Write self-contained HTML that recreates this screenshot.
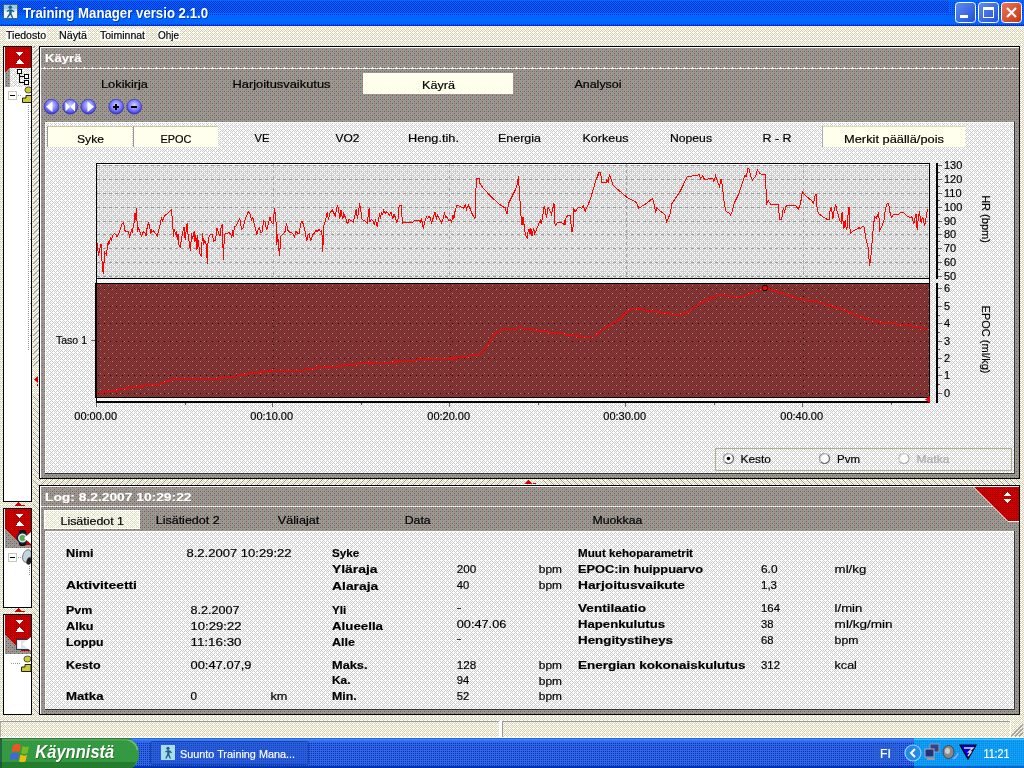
<!DOCTYPE html>
<html lang="fi"><head><meta charset="utf-8"><title>Training Manager versio 2.1.0</title>
<style>html,body{margin:0;padding:0;width:1024px;height:768px;overflow:hidden;background:#ece9d8;font-family:"Liberation Sans",sans-serif}svg{display:block;position:absolute;left:0;top:0;will-change:transform}text{font-family:"Liberation Sans",sans-serif;white-space:pre}</style></head>
<body>
<svg width="1024" height="768" viewBox="0 0 1024 768" shape-rendering="crispEdges" font-family="'Liberation Sans', sans-serif">
<defs><pattern id="pBeige" x="0" y="2" width="4" height="4" patternUnits="userSpaceOnUse"><rect width="4" height="4" fill="#ffffff"/><rect x="0" y="1" width="1" height="1" fill="#cccccc"/><rect x="0" y="3" width="1" height="1" fill="#cccccc"/><rect x="1" y="0" width="1" height="1" fill="#cccccc"/><rect x="1" y="1" width="1" height="1" fill="#ffffcc"/><rect x="1" y="2" width="1" height="1" fill="#ffffcc"/><rect x="1" y="3" width="1" height="1" fill="#ffffcc"/><rect x="2" y="1" width="1" height="1" fill="#cccccc"/><rect x="2" y="3" width="1" height="1" fill="#cccccc"/><rect x="3" y="0" width="1" height="1" fill="#ffcccc"/><rect x="3" y="1" width="1" height="1" fill="#ffffcc"/><rect x="3" y="2" width="1" height="1" fill="#cccccc"/><rect x="3" y="3" width="1" height="1" fill="#ffffcc"/></pattern><pattern id="pGray" x="0" y="1" width="8" height="8" patternUnits="userSpaceOnUse"><rect width="8" height="8" fill="#999999"/><rect x="0" y="0" width="1" height="1" fill="#99995c"/><rect x="0" y="2" width="1" height="1" fill="#626262"/><rect x="0" y="4" width="1" height="1" fill="#99995c"/><rect x="0" y="6" width="1" height="1" fill="#626262"/><rect x="1" y="5" width="1" height="1" fill="#99995c"/><rect x="2" y="0" width="1" height="1" fill="#b86868"/><rect x="2" y="2" width="1" height="1" fill="#b86868"/><rect x="2" y="4" width="1" height="1" fill="#626262"/><rect x="2" y="6" width="1" height="1" fill="#b86868"/><rect x="4" y="0" width="1" height="1" fill="#99995c"/><rect x="4" y="2" width="1" height="1" fill="#626262"/><rect x="4" y="4" width="1" height="1" fill="#99995c"/><rect x="4" y="6" width="1" height="1" fill="#626262"/><rect x="5" y="1" width="1" height="1" fill="#99995c"/><rect x="6" y="0" width="1" height="1" fill="#626262"/><rect x="6" y="2" width="1" height="1" fill="#b86868"/><rect x="6" y="4" width="1" height="1" fill="#626262"/><rect x="6" y="6" width="1" height="1" fill="#b86868"/></pattern><pattern id="pLight" x="0" y="0" width="8" height="8" patternUnits="userSpaceOnUse"><rect width="8" height="8" fill="#ffffff"/><rect x="0" y="1" width="1" height="1" fill="#cccccc"/><rect x="0" y="3" width="1" height="1" fill="#cccccc"/><rect x="0" y="5" width="1" height="1" fill="#cccccc"/><rect x="0" y="7" width="1" height="1" fill="#cccccc"/><rect x="1" y="2" width="1" height="1" fill="#cccccc"/><rect x="1" y="6" width="1" height="1" fill="#cccccc"/><rect x="2" y="1" width="1" height="1" fill="#cccccc"/><rect x="2" y="3" width="1" height="1" fill="#cccccc"/><rect x="2" y="5" width="1" height="1" fill="#cccccc"/><rect x="2" y="7" width="1" height="1" fill="#cccccc"/><rect x="3" y="0" width="1" height="1" fill="#cccccc"/><rect x="3" y="4" width="1" height="1" fill="#cccccc"/><rect x="3" y="6" width="1" height="1" fill="#cccccc"/><rect x="4" y="1" width="1" height="1" fill="#cccccc"/><rect x="4" y="3" width="1" height="1" fill="#cccccc"/><rect x="4" y="5" width="1" height="1" fill="#cccccc"/><rect x="4" y="7" width="1" height="1" fill="#cccccc"/><rect x="5" y="2" width="1" height="1" fill="#cccccc"/><rect x="5" y="6" width="1" height="1" fill="#cccccc"/><rect x="6" y="1" width="1" height="1" fill="#cccccc"/><rect x="6" y="3" width="1" height="1" fill="#cccccc"/><rect x="6" y="5" width="1" height="1" fill="#cccccc"/><rect x="6" y="7" width="1" height="1" fill="#cccccc"/><rect x="7" y="0" width="1" height="1" fill="#cccccc"/><rect x="7" y="2" width="1" height="1" fill="#cccccc"/><rect x="7" y="4" width="1" height="1" fill="#cccccc"/></pattern><pattern id="pPlot" x="0" y="0" width="8" height="8" patternUnits="userSpaceOnUse"><rect width="8" height="8" fill="#cccccc"/><rect x="0" y="0" width="1" height="1" fill="#ffffff"/><rect x="0" y="2" width="1" height="1" fill="#ffffff"/><rect x="0" y="4" width="1" height="1" fill="#ffffff"/><rect x="0" y="6" width="1" height="1" fill="#ffffff"/><rect x="1" y="1" width="1" height="1" fill="#ffffff"/><rect x="1" y="5" width="1" height="1" fill="#ffffff"/><rect x="2" y="0" width="1" height="1" fill="#ffffff"/><rect x="2" y="2" width="1" height="1" fill="#ffffff"/><rect x="2" y="4" width="1" height="1" fill="#ffffff"/><rect x="2" y="6" width="1" height="1" fill="#ffffff"/><rect x="3" y="3" width="1" height="1" fill="#ffffff"/><rect x="4" y="0" width="1" height="1" fill="#ffffff"/><rect x="4" y="2" width="1" height="1" fill="#ffffff"/><rect x="4" y="4" width="1" height="1" fill="#ffffff"/><rect x="4" y="6" width="1" height="1" fill="#ffffff"/><rect x="5" y="1" width="1" height="1" fill="#ffffff"/><rect x="5" y="5" width="1" height="1" fill="#ffffff"/><rect x="6" y="0" width="1" height="1" fill="#ffffff"/><rect x="6" y="2" width="1" height="1" fill="#ffffff"/><rect x="6" y="4" width="1" height="1" fill="#ffffff"/><rect x="6" y="6" width="1" height="1" fill="#ffffff"/><rect x="7" y="7" width="1" height="1" fill="#ffffff"/></pattern><pattern id="pDred" x="96" y="284" width="8" height="8" patternUnits="userSpaceOnUse"><rect width="8" height="8" fill="#993333"/><rect x="0" y="0" width="1" height="1" fill="#663333"/><rect x="0" y="2" width="1" height="1" fill="#663333"/><rect x="0" y="4" width="1" height="1" fill="#663333"/><rect x="0" y="5" width="1" height="1" fill="#b88888"/><rect x="0" y="6" width="1" height="1" fill="#663333"/><rect x="1" y="1" width="1" height="1" fill="#663333"/><rect x="1" y="3" width="1" height="1" fill="#663333"/><rect x="1" y="5" width="1" height="1" fill="#663333"/><rect x="1" y="7" width="1" height="1" fill="#663333"/><rect x="2" y="0" width="1" height="1" fill="#663333"/><rect x="2" y="2" width="1" height="1" fill="#663333"/><rect x="2" y="4" width="1" height="1" fill="#663333"/><rect x="2" y="6" width="1" height="1" fill="#663333"/><rect x="3" y="1" width="1" height="1" fill="#663333"/><rect x="3" y="3" width="1" height="1" fill="#663333"/><rect x="3" y="5" width="1" height="1" fill="#663333"/><rect x="3" y="7" width="1" height="1" fill="#663333"/><rect x="4" y="0" width="1" height="1" fill="#663333"/><rect x="4" y="1" width="1" height="1" fill="#b88888"/><rect x="4" y="2" width="1" height="1" fill="#663333"/><rect x="4" y="4" width="1" height="1" fill="#663333"/><rect x="4" y="6" width="1" height="1" fill="#663333"/><rect x="5" y="1" width="1" height="1" fill="#663333"/><rect x="5" y="3" width="1" height="1" fill="#663333"/><rect x="5" y="5" width="1" height="1" fill="#663333"/><rect x="5" y="7" width="1" height="1" fill="#663333"/><rect x="6" y="0" width="1" height="1" fill="#663333"/><rect x="6" y="2" width="1" height="1" fill="#663333"/><rect x="6" y="4" width="1" height="1" fill="#663333"/><rect x="6" y="6" width="1" height="1" fill="#663333"/><rect x="7" y="1" width="1" height="1" fill="#663333"/><rect x="7" y="3" width="1" height="1" fill="#663333"/><rect x="7" y="5" width="1" height="1" fill="#663333"/><rect x="7" y="7" width="1" height="1" fill="#663333"/></pattern><pattern id="pCream" x="0" y="0" width="2" height="2" patternUnits="userSpaceOnUse"><rect width="2" height="2" fill="#ffffff"/><rect x="0" y="0" width="1" height="1" fill="#ffffcc"/><rect x="1" y="1" width="1" height="1" fill="#ffffcc"/></pattern><pattern id="pCream2" x="0" y="0" width="4" height="4" patternUnits="userSpaceOnUse"><rect width="4" height="4" fill="#ffffff"/><rect x="0" y="0" width="1" height="1" fill="#ffffcc"/><rect x="0" y="2" width="1" height="1" fill="#ffffcc"/><rect x="1" y="1" width="1" height="1" fill="#ffffcc"/><rect x="2" y="0" width="1" height="1" fill="#ffffcc"/><rect x="2" y="2" width="1" height="1" fill="#ffffcc"/><rect x="3" y="3" width="1" height="1" fill="#ffffcc"/></pattern><pattern id="pRed" x="0" y="0" width="2" height="2" patternUnits="userSpaceOnUse"><rect width="2" height="2" fill="#cc0000"/><rect x="0" y="0" width="1" height="1" fill="#990000"/></pattern><pattern id="pTitle" x="0" y="0" width="2" height="2" patternUnits="userSpaceOnUse"><rect width="2" height="2" fill="#0066ff"/><rect x="0" y="0" width="1" height="1" fill="#0033cc"/><rect x="1" y="1" width="1" height="1" fill="#0033cc"/></pattern><pattern id="pTitle25" x="0" y="0" width="2" height="2" patternUnits="userSpaceOnUse"><rect width="2" height="2" fill="#0066ff"/><rect x="0" y="0" width="1" height="1" fill="#0033cc"/></pattern><pattern id="pTitle75" x="0" y="0" width="2" height="2" patternUnits="userSpaceOnUse"><rect width="2" height="2" fill="#0033cc"/><rect x="0" y="0" width="1" height="1" fill="#0066ff"/></pattern><pattern id="pTask" x="0" y="0" width="2" height="2" patternUnits="userSpaceOnUse"><rect width="2" height="2" fill="#3366cc"/><rect x="0" y="0" width="1" height="1" fill="#3366ff"/><rect x="1" y="1" width="1" height="1" fill="#0033cc"/></pattern><pattern id="pTray" x="0" y="0" width="2" height="2" patternUnits="userSpaceOnUse"><rect width="2" height="2" fill="#0099ff"/><rect x="0" y="0" width="1" height="1" fill="#3399ff"/><rect x="1" y="1" width="1" height="1" fill="#0099cc"/></pattern><pattern id="pGreen" x="0" y="0" width="2" height="2" patternUnits="userSpaceOnUse"><rect width="2" height="2" fill="#339933"/><rect x="0" y="0" width="1" height="1" fill="#339966"/><rect x="1" y="1" width="1" height="1" fill="#33993a"/></pattern><pattern id="pHatchH" x="0" y="5" width="6" height="6" patternUnits="userSpaceOnUse"><rect width="6" height="6" fill="none"/><rect x="0" y="4" width="1" height="1" fill="#969696"/><rect x="1" y="3" width="1" height="1" fill="#969696"/><rect x="2" y="2" width="1" height="1" fill="#969696"/><rect x="3" y="1" width="1" height="1" fill="#969696"/><rect x="4" y="0" width="1" height="1" fill="#969696"/><rect x="5" y="5" width="1" height="1" fill="#969696"/></pattern><pattern id="pHatchV" x="0" y="0" width="6" height="6" patternUnits="userSpaceOnUse"><rect width="6" height="6" fill="none"/><rect x="0" y="2" width="1" height="1" fill="#969696"/><rect x="1" y="1" width="1" height="1" fill="#969696"/><rect x="2" y="0" width="1" height="1" fill="#969696"/><rect x="3" y="5" width="1" height="1" fill="#969696"/><rect x="4" y="4" width="1" height="1" fill="#969696"/><rect x="5" y="3" width="1" height="1" fill="#969696"/></pattern><pattern id="pHatchB" x="0" y="5" width="6" height="6" patternUnits="userSpaceOnUse"><rect width="6" height="6" fill="none"/><rect x="0" y="4" width="1" height="1" fill="#969696"/><rect x="1" y="5" width="1" height="1" fill="#969696"/><rect x="2" y="0" width="1" height="1" fill="#969696"/><rect x="3" y="1" width="1" height="1" fill="#969696"/><rect x="4" y="2" width="1" height="1" fill="#969696"/><rect x="5" y="3" width="1" height="1" fill="#969696"/></pattern><radialGradient id="gBtn" cx="0.5" cy="0.4" r="0.6"><stop offset="0" stop-color="#d4d4ff"/><stop offset="0.4" stop-color="#9898ff"/><stop offset="0.75" stop-color="#6060ee"/><stop offset="1" stop-color="#2c2cbb"/></radialGradient><linearGradient id="gMin" x1="0" y1="0" x2="1" y2="1"><stop offset="0" stop-color="#5f8cf5"/><stop offset="1" stop-color="#1f4fd8"/></linearGradient><linearGradient id="gClose" x1="0" y1="0" x2="1" y2="1"><stop offset="0" stop-color="#ee7755"/><stop offset="1" stop-color="#c83311"/></linearGradient><linearGradient id="gStart" x1="0" y1="0" x2="0" y2="1"><stop offset="0" stop-color="#5aa85a"/><stop offset="0.15" stop-color="#3f9a3f"/><stop offset="0.85" stop-color="#2f8f2f"/><stop offset="1" stop-color="#2a7a2a"/></linearGradient></defs>
<rect x="0" y="0" width="1024" height="768" fill="url(#pBeige)"/>
<rect x="0" y="0" width="1024" height="26" fill="#0066ff"/>
<rect x="0" y="1" width="1024" height="12" fill="url(#pTitle)"/>
<rect x="0" y="13" width="1024" height="3" fill="url(#pTitle25)"/>
<rect x="948" y="1" width="76" height="12" fill="#0066ff"/>
<rect x="948" y="1" width="76" height="12" fill="url(#pTitle25)"/>
<rect x="0" y="23" width="1024" height="1" fill="url(#pTitle25)"/>
<rect x="0" y="24" width="1024" height="1" fill="url(#pTitle75)"/>
<rect x="0" y="25" width="1024" height="1" fill="#0033cc"/>
<rect x="3" y="4" width="15" height="15" fill="#446666"/>
<rect x="4" y="5" width="13" height="13" fill="#99ccf5"/>
<rect x="4" y="11" width="13" height="7" fill="#eef4f8"/>
<rect x="4" y="9" width="13" height="2" fill="#c4e0f6"/>
<g fill="#1a6088" shape-rendering="auto" transform="translate(0 -0.8)"><circle cx="10.3" cy="8" r="1.8"/><path d="M6.5 11.8L9.5 10L12 10.3L14.5 12L13.9 13L11.8 12L11.6 14.5L13.3 18.6L12 18.9L10.3 15.6L8 18.9L6.7 18.3L9.2 14.3L9.2 11.8L7.2 12.8Z"/></g>
<text x="24" y="19" font-size="14" fill="#001a80" textLength="185" lengthAdjust="spacingAndGlyphs" font-weight="bold" opacity="0.55" stroke="none">Training Manager versio 2.1.0</text>
<text x="23" y="18" font-size="14" fill="#fff" textLength="185" lengthAdjust="spacingAndGlyphs" font-weight="bold" stroke="none">Training Manager versio 2.1.0</text>
<rect x="955.5" y="2.5" width="20" height="20" rx="3" ry="3" fill="url(#gMin)" stroke="#fff" stroke-width="1" shape-rendering="auto"/>
<rect x="978.5" y="2.5" width="20" height="20" rx="3" ry="3" fill="url(#gMin)" stroke="#fff" stroke-width="1" shape-rendering="auto"/>
<rect x="1001.5" y="2.5" width="20" height="20" rx="3" ry="3" fill="url(#gClose)" stroke="#fff" stroke-width="1" shape-rendering="auto"/>
<rect x="960" y="15" width="8" height="3" fill="#fff"/>
<rect x="983.5" y="8.5" width="10" height="9" fill="none" stroke="#fff" stroke-width="1"/>
<rect x="983" y="7" width="11" height="3" fill="#fff"/>
<path d="M1007 8L1016 17M1016 8L1007 17" stroke="#fff" stroke-width="2.2" fill="none" shape-rendering="auto"/>
<rect x="6" y="29" width="41" height="12" fill="#ffffff" opacity="0.75"/>
<rect x="59" y="29" width="29" height="12" fill="#ffffff" opacity="0.75"/>
<rect x="100" y="29" width="46" height="12" fill="#ffffff" opacity="0.75"/>
<rect x="158" y="29" width="22" height="12" fill="#ffffff" opacity="0.75"/>
<text x="6" y="39" font-size="11" fill="#000" textLength="40" lengthAdjust="spacingAndGlyphs" stroke="#000" stroke-width="0.18">Tiedosto</text>
<text x="59" y="39" font-size="11" fill="#000" textLength="28" lengthAdjust="spacingAndGlyphs" stroke="#000" stroke-width="0.18">Näytä</text>
<text x="100" y="39" font-size="11" fill="#000" textLength="45" lengthAdjust="spacingAndGlyphs" stroke="#000" stroke-width="0.18">Toiminnat</text>
<text x="158" y="39" font-size="11" fill="#000" textLength="21" lengthAdjust="spacingAndGlyphs" stroke="#000" stroke-width="0.18">Ohje</text>
<rect x="33" y="46" width="6" height="320" fill="url(#pHatchV)"/>
<rect x="33" y="394" width="6" height="321" fill="url(#pHatchB)"/>
<path d="M34 379.5 L38 376 L38 383 Z" fill="#cc0000" shape-rendering="auto"/>
<rect x="37" y="384" width="1" height="2" fill="#cc0000"/>
<rect x="39" y="479" width="478" height="6" fill="url(#pHatchH)"/>
<rect x="543" y="479" width="477" height="6" fill="url(#pHatchB)"/>
<path d="M524.5 484 L532.5 484 L528.5 479.7 Z" fill="#cc0000" shape-rendering="auto"/>
<rect x="533" y="483" width="3" height="1" fill="#cc0000"/>
<clipPath id="clipL"><rect x="4" y="46" width="27" height="670"/></clipPath>
<rect x="3" y="46" width="29" height="456" fill="#000"/>
<rect x="4" y="47" width="27" height="454" fill="#fff"/>
<rect x="5" y="47" width="26" height="21" fill="url(#pRed)"/>
<rect x="5" y="68" width="5" height="19" fill="url(#pGray)"/>
<path d="M5 68 L9 68 L5 72 Z" fill="#cc0000"/>
<rect x="10" y="68" width="21" height="19" fill="url(#pLight)"/>
<path d="M15.7 52 L23.7 52 L19.7 56 Z" fill="#fff"/>
<path d="M15.7 63.5 L23.7 63.5 L19.7 59 Z" fill="#fff"/>
<g clip-path="url(#clipL)">
<rect x="17.5" y="69.5" width="4" height="4" fill="#fff" stroke="#000" stroke-width="1"/>
<rect x="24.5" y="74.5" width="4" height="4" fill="#fff" stroke="#000" stroke-width="1"/>
<rect x="24.5" y="80.5" width="4" height="4" fill="#fff" stroke="#000" stroke-width="1"/>
<rect x="19" y="74" width="1" height="9" fill="#000"/>
<rect x="19" y="76" width="5" height="1" fill="#000"/>
<rect x="19" y="82" width="5" height="1" fill="#000"/>
<rect x="8.5" y="91.5" width="8" height="8" fill="#fff" stroke="#c8c8b0" stroke-width="1"/>
<rect x="10" y="95" width="5" height="1" fill="#000"/>
<rect x="18" y="95" width="1" height="1" fill="#999"/>
<rect x="20" y="95" width="1" height="1" fill="#999"/>
<g shape-rendering="auto">
<ellipse cx="28.5" cy="90" rx="3.6" ry="3" fill="#cccc33" stroke="#333" stroke-width="0.8"/>
<path d="M22.5 102.5 h9.5 v-7 h-6 v2.5 h-3.5 Z" fill="#cccc33" stroke="#222" stroke-width="1"/>
</g>
<rect x="28" y="105" width="1" height="1" fill="#999"/>
<rect x="28" y="107" width="1" height="1" fill="#999"/>
<rect x="28" y="109" width="1" height="1" fill="#999"/>
<rect x="28" y="111" width="1" height="1" fill="#999"/>
<rect x="28" y="113" width="1" height="1" fill="#999"/>
<rect x="28" y="115" width="1" height="1" fill="#999"/>
<rect x="28" y="117" width="1" height="1" fill="#999"/>
<rect x="28" y="119" width="1" height="1" fill="#999"/>
<rect x="28" y="121" width="1" height="1" fill="#999"/>
<rect x="28" y="123" width="1" height="1" fill="#999"/>
<rect x="28" y="125" width="1" height="1" fill="#999"/>
<rect x="28" y="127" width="1" height="1" fill="#999"/>
<rect x="28" y="129" width="1" height="1" fill="#999"/>
<rect x="28" y="131" width="1" height="1" fill="#999"/>
<rect x="28" y="133" width="1" height="1" fill="#999"/>
<rect x="28" y="135" width="1" height="1" fill="#999"/>
<rect x="28" y="137" width="1" height="1" fill="#999"/>
<rect x="28" y="139" width="1" height="1" fill="#999"/>
<rect x="28" y="141" width="1" height="1" fill="#999"/>
<rect x="28" y="143" width="1" height="1" fill="#999"/>
<rect x="28" y="145" width="1" height="1" fill="#999"/>
<rect x="28" y="147" width="1" height="1" fill="#999"/>
<rect x="28" y="149" width="1" height="1" fill="#999"/>
<rect x="28" y="151" width="1" height="1" fill="#999"/>
<rect x="28" y="153" width="1" height="1" fill="#999"/>
<rect x="28" y="155" width="1" height="1" fill="#999"/>
<rect x="28" y="157" width="1" height="1" fill="#999"/>
<rect x="28" y="159" width="1" height="1" fill="#999"/>
<rect x="28" y="161" width="1" height="1" fill="#999"/>
<rect x="28" y="163" width="1" height="1" fill="#999"/>
<rect x="28" y="165" width="1" height="1" fill="#999"/>
<rect x="28" y="167" width="1" height="1" fill="#999"/>
<rect x="28" y="169" width="1" height="1" fill="#999"/>
<rect x="28" y="171" width="1" height="1" fill="#999"/>
<rect x="28" y="173" width="1" height="1" fill="#999"/>
<rect x="28" y="175" width="1" height="1" fill="#999"/>
<rect x="28" y="177" width="1" height="1" fill="#999"/>
<rect x="28" y="179" width="1" height="1" fill="#999"/>
<rect x="28" y="181" width="1" height="1" fill="#999"/>
<rect x="28" y="183" width="1" height="1" fill="#999"/>
<rect x="28" y="185" width="1" height="1" fill="#999"/>
<rect x="28" y="187" width="1" height="1" fill="#999"/>
<rect x="28" y="189" width="1" height="1" fill="#999"/>
<rect x="28" y="191" width="1" height="1" fill="#999"/>
<rect x="28" y="193" width="1" height="1" fill="#999"/>
<rect x="28" y="195" width="1" height="1" fill="#999"/>
<rect x="28" y="197" width="1" height="1" fill="#999"/>
<rect x="28" y="199" width="1" height="1" fill="#999"/>
<rect x="28" y="201" width="1" height="1" fill="#999"/>
<rect x="28" y="203" width="1" height="1" fill="#999"/>
<rect x="28" y="205" width="1" height="1" fill="#999"/>
<rect x="28" y="207" width="1" height="1" fill="#999"/>
<rect x="28" y="209" width="1" height="1" fill="#999"/>
<rect x="28" y="211" width="1" height="1" fill="#999"/>
<rect x="28" y="213" width="1" height="1" fill="#999"/>
<rect x="28" y="215" width="1" height="1" fill="#999"/>
<rect x="28" y="217" width="1" height="1" fill="#999"/>
<rect x="28" y="219" width="1" height="1" fill="#999"/>
<rect x="28" y="221" width="1" height="1" fill="#999"/>
<rect x="28" y="223" width="1" height="1" fill="#999"/>
<rect x="28" y="225" width="1" height="1" fill="#999"/>
<rect x="28" y="227" width="1" height="1" fill="#999"/>
<rect x="28" y="229" width="1" height="1" fill="#999"/>
<rect x="28" y="231" width="1" height="1" fill="#999"/>
<rect x="28" y="233" width="1" height="1" fill="#999"/>
<rect x="28" y="235" width="1" height="1" fill="#999"/>
<rect x="28" y="237" width="1" height="1" fill="#999"/>
<rect x="28" y="239" width="1" height="1" fill="#999"/>
<rect x="28" y="241" width="1" height="1" fill="#999"/>
<rect x="28" y="243" width="1" height="1" fill="#999"/>
<rect x="28" y="245" width="1" height="1" fill="#999"/>
<rect x="28" y="247" width="1" height="1" fill="#999"/>
<rect x="28" y="249" width="1" height="1" fill="#999"/>
<rect x="28" y="251" width="1" height="1" fill="#999"/>
<rect x="28" y="253" width="1" height="1" fill="#999"/>
<rect x="28" y="255" width="1" height="1" fill="#999"/>
<rect x="28" y="257" width="1" height="1" fill="#999"/>
<rect x="28" y="259" width="1" height="1" fill="#999"/>
<rect x="28" y="261" width="1" height="1" fill="#999"/>
<rect x="28" y="263" width="1" height="1" fill="#999"/>
<rect x="28" y="265" width="1" height="1" fill="#999"/>
<rect x="28" y="267" width="1" height="1" fill="#999"/>
<rect x="28" y="269" width="1" height="1" fill="#999"/>
<rect x="28" y="271" width="1" height="1" fill="#999"/>
<rect x="28" y="273" width="1" height="1" fill="#999"/>
<rect x="28" y="275" width="1" height="1" fill="#999"/>
<rect x="28" y="277" width="1" height="1" fill="#999"/>
<rect x="28" y="279" width="1" height="1" fill="#999"/>
<rect x="28" y="281" width="1" height="1" fill="#999"/>
<rect x="28" y="283" width="1" height="1" fill="#999"/>
<rect x="28" y="285" width="1" height="1" fill="#999"/>
<rect x="28" y="287" width="1" height="1" fill="#999"/>
<rect x="28" y="289" width="1" height="1" fill="#999"/>
<rect x="28" y="291" width="1" height="1" fill="#999"/>
<rect x="28" y="293" width="1" height="1" fill="#999"/>
<rect x="28" y="295" width="1" height="1" fill="#999"/>
<rect x="28" y="297" width="1" height="1" fill="#999"/>
<rect x="28" y="299" width="1" height="1" fill="#999"/>
<rect x="28" y="301" width="1" height="1" fill="#999"/>
<rect x="28" y="303" width="1" height="1" fill="#999"/>
<rect x="28" y="305" width="1" height="1" fill="#999"/>
<rect x="28" y="307" width="1" height="1" fill="#999"/>
<rect x="28" y="309" width="1" height="1" fill="#999"/>
<rect x="28" y="311" width="1" height="1" fill="#999"/>
<rect x="28" y="313" width="1" height="1" fill="#999"/>
<rect x="28" y="315" width="1" height="1" fill="#999"/>
<rect x="28" y="317" width="1" height="1" fill="#999"/>
<rect x="28" y="319" width="1" height="1" fill="#999"/>
<rect x="28" y="321" width="1" height="1" fill="#999"/>
<rect x="28" y="323" width="1" height="1" fill="#999"/>
<rect x="28" y="325" width="1" height="1" fill="#999"/>
<rect x="28" y="327" width="1" height="1" fill="#999"/>
<rect x="28" y="329" width="1" height="1" fill="#999"/>
<rect x="28" y="331" width="1" height="1" fill="#999"/>
<rect x="28" y="333" width="1" height="1" fill="#999"/>
<rect x="28" y="335" width="1" height="1" fill="#999"/>
<rect x="28" y="337" width="1" height="1" fill="#999"/>
<rect x="28" y="339" width="1" height="1" fill="#999"/>
<rect x="28" y="341" width="1" height="1" fill="#999"/>
<rect x="28" y="343" width="1" height="1" fill="#999"/>
<rect x="28" y="345" width="1" height="1" fill="#999"/>
<rect x="28" y="347" width="1" height="1" fill="#999"/>
<rect x="28" y="349" width="1" height="1" fill="#999"/>
<rect x="30" y="111" width="1" height="1" fill="#999"/>
<rect x="30" y="127" width="1" height="1" fill="#999"/>
<rect x="30" y="143" width="1" height="1" fill="#999"/>
<rect x="30" y="159" width="1" height="1" fill="#999"/>
<rect x="30" y="175" width="1" height="1" fill="#999"/>
<rect x="30" y="191" width="1" height="1" fill="#999"/>
<rect x="30" y="207" width="1" height="1" fill="#999"/>
<rect x="30" y="223" width="1" height="1" fill="#999"/>
<rect x="30" y="239" width="1" height="1" fill="#999"/>
<rect x="30" y="255" width="1" height="1" fill="#999"/>
<rect x="30" y="271" width="1" height="1" fill="#999"/>
<rect x="30" y="287" width="1" height="1" fill="#999"/>
<rect x="30" y="303" width="1" height="1" fill="#999"/>
<rect x="30" y="319" width="1" height="1" fill="#999"/>
<rect x="30" y="335" width="1" height="1" fill="#999"/>
</g>
<rect x="3" y="508" width="29" height="100" fill="#000"/>
<rect x="4" y="509" width="27" height="98" fill="#fff"/>
<rect x="5" y="509" width="26" height="39" fill="url(#pGray)"/>
<path d="M5 509 L31 509 L31 545 L21 545 L5 529 Z" fill="url(#pRed)"/>
<path d="M15.7 514 L23.7 514 L19.7 518 Z" fill="#fff"/>
<path d="M15.7 525.5 L23.7 525.5 L19.7 521 Z" fill="#fff"/>
<g clip-path="url(#clipL)">
<g shape-rendering="auto"><rect x="19" y="530" width="7" height="16" rx="2" fill="#111"/><circle cx="22.5" cy="538" r="5.2" fill="#dfe8df" stroke="#112244" stroke-width="1.4"/><circle cx="22.5" cy="538" r="3" fill="#55aa55"/><path d="M24 538 L31 532 L31 544 Z" fill="#fff"/></g>
<rect x="8.5" y="553.5" width="8" height="8" fill="#fff" stroke="#c8c8b0" stroke-width="1"/>
<rect x="10" y="557" width="5" height="1" fill="#000"/>
<rect x="18" y="557" width="1" height="1" fill="#999"/>
<rect x="20" y="557" width="1" height="1" fill="#999"/>
<g shape-rendering="auto"><ellipse cx="27" cy="556" rx="4.2" ry="6.5" fill="#c4d4dc" stroke="#667" stroke-width="0.8" transform="rotate(18 27 556)"/><ellipse cx="29" cy="561" rx="2.4" ry="3.8" fill="#222" transform="rotate(18 29 561)"/></g>
<rect x="29" y="566" width="1" height="1" fill="#999"/>
<rect x="29" y="568" width="1" height="1" fill="#999"/>
<rect x="29" y="570" width="1" height="1" fill="#999"/>
<rect x="29" y="572" width="1" height="1" fill="#999"/>
<rect x="29" y="574" width="1" height="1" fill="#999"/>
</g>
<rect x="3" y="614" width="29" height="101" fill="#000"/>
<rect x="4" y="615" width="27" height="99" fill="#fff"/>
<rect x="5" y="615" width="26" height="39" fill="url(#pGray)"/>
<path d="M5 615 L31 615 L31 651 L21 651 L5 635 Z" fill="url(#pRed)"/>
<path d="M15.7 620 L23.7 620 L19.7 624 Z" fill="#fff"/>
<path d="M15.7 631.5 L23.7 631.5 L19.7 627 Z" fill="#fff"/>
<g clip-path="url(#clipL)">
<g shape-rendering="auto"><rect x="16.5" y="639.5" width="13" height="10" fill="#dde6ee" stroke="#334" stroke-width="1"/><rect x="18" y="641" width="3" height="7" fill="#fff"/><path d="M22 644 L31 637 L31 651 Z" fill="#fff"/></g>
<rect x="11" y="663" width="1" height="1" fill="#999"/>
<rect x="13" y="663" width="1" height="1" fill="#999"/>
<rect x="15" y="663" width="1" height="1" fill="#999"/>
<rect x="17" y="663" width="1" height="1" fill="#999"/>
<rect x="19" y="663" width="1" height="1" fill="#999"/>
<g shape-rendering="auto">
<ellipse cx="27.5" cy="659" rx="3.6" ry="3" fill="#cccc33" stroke="#333" stroke-width="0.8"/>
<path d="M21.5 671.5 h9.5 v-7 h-6 v2.5 h-3.5 Z" fill="#cccc33" stroke="#222" stroke-width="1"/>
</g>
</g>
<path d="M14 506 L22 506 L18 502 Z" fill="#cc0000"/>
<rect x="22" y="505" width="3" height="1" fill="#cc0000"/>
<path d="M14 612 L22 612 L18 608 Z" fill="#cc0000"/>
<rect x="22" y="611" width="3" height="1" fill="#cc0000"/>
<rect x="39" y="46" width="981" height="433" fill="#000"/>
<rect x="40" y="47" width="979" height="431" fill="url(#pGray)"/>
<rect x="40" y="47" width="979" height="1" fill="#fff"/>
<rect x="40" y="47" width="1" height="431" fill="#fff"/>
<text x="45" y="62" font-size="11" fill="#fff" textLength="36.5" lengthAdjust="spacingAndGlyphs" font-weight="bold" stroke="#fff" stroke-width="0.18">Käyrä</text>
<rect x="41" y="68" width="978" height="1" fill="#d4d4d4"/>
<path d="M41 68.5 H1019" stroke="#fff" stroke-width="1" stroke-dasharray="1 1" fill="none"/>
<path d="M43 68.5 H1019" stroke="#fff" stroke-width="1" stroke-dasharray="3 5" fill="none"/>
<path d="M44 67.5 H1019" stroke="#f4f4f4" stroke-width="1" stroke-dasharray="1 7" fill="none"/>
<text x="101" y="88" font-size="11" fill="#000" textLength="47" lengthAdjust="spacingAndGlyphs" stroke="#000" stroke-width="0.18">Lokikirja</text>
<text x="232.5" y="88" font-size="11" fill="#000" textLength="98" lengthAdjust="spacingAndGlyphs" stroke="#000" stroke-width="0.18">Harjoitusvaikutus</text>
<rect x="363" y="73" width="150" height="21" fill="url(#pCream2)"/>
<text x="422" y="88.5" font-size="11" fill="#000" textLength="33" lengthAdjust="spacingAndGlyphs" stroke="#000" stroke-width="0.18">Käyrä</text>
<text x="574.5" y="88" font-size="11" fill="#000" textLength="47" lengthAdjust="spacingAndGlyphs" stroke="#000" stroke-width="0.18">Analysoi</text>
<circle cx="51.5" cy="106.7" r="7.4" fill="url(#gBtn)" stroke="#3a3ab0" stroke-width="0.7" shape-rendering="auto"/>
<circle cx="70.2" cy="106.7" r="7.4" fill="url(#gBtn)" stroke="#3a3ab0" stroke-width="0.7" shape-rendering="auto"/>
<circle cx="88.3" cy="106.7" r="7.4" fill="url(#gBtn)" stroke="#3a3ab0" stroke-width="0.7" shape-rendering="auto"/>
<circle cx="116.2" cy="106.7" r="7.4" fill="url(#gBtn)" stroke="#3a3ab0" stroke-width="0.7" shape-rendering="auto"/>
<circle cx="134.2" cy="106.7" r="7.4" fill="url(#gBtn)" stroke="#3a3ab0" stroke-width="0.7" shape-rendering="auto"/>
<g fill="#fff" shape-rendering="auto"><path d="M46 106.7 L52.5 101.5 L52.5 112 Z"/><path d="M65.5 102 L70 106.7 L65.5 111.5 Z M75 102 L70.4 106.7 L75 111.5 Z"/><path d="M94 106.7 L87.5 101.5 L87.5 112 Z"/></g>
<rect x="113" y="106" width="6" height="2" fill="#000"/>
<rect x="115" y="104" width="2" height="6" fill="#000"/>
<rect x="131" y="106" width="6" height="2" fill="#000"/>
<rect x="45" y="122" width="969" height="351" fill="url(#pLight)"/>
<rect x="45" y="122" width="969" height="1" fill="#fff"/>
<rect x="45" y="122" width="1" height="351" fill="#fff"/>
<rect x="45" y="473" width="970" height="1" fill="#333"/>
<rect x="1014" y="122" width="1" height="352" fill="#333"/>
<rect x="47" y="126" width="85" height="21" fill="url(#pCream2)"/>
<rect x="47" y="126" width="85" height="1" fill="#cccc99"/>
<rect x="47" y="126" width="1" height="21" fill="#999"/>
<rect x="133" y="126" width="85" height="21" fill="url(#pCream2)"/>
<rect x="133" y="126" width="85" height="1" fill="#cccc99"/>
<rect x="133" y="126" width="1" height="21" fill="#999"/>
<text x="77" y="143" font-size="11" fill="#000" textLength="27" lengthAdjust="spacingAndGlyphs" stroke="#000" stroke-width="0.18">Syke</text>
<text x="160.5" y="143" font-size="11" fill="#000" textLength="31" lengthAdjust="spacingAndGlyphs" stroke="#000" stroke-width="0.18">EPOC</text>
<text x="254.5" y="142" font-size="11" fill="#000" textLength="15" lengthAdjust="spacingAndGlyphs" stroke="#000" stroke-width="0.18">VE</text>
<text x="335.5" y="142" font-size="11" fill="#000" textLength="24" lengthAdjust="spacingAndGlyphs" stroke="#000" stroke-width="0.18">VO2</text>
<text x="408" y="142" font-size="11" fill="#000" textLength="51" lengthAdjust="spacingAndGlyphs" stroke="#000" stroke-width="0.18">Heng.tih.</text>
<text x="498" y="142" font-size="11" fill="#000" textLength="43" lengthAdjust="spacingAndGlyphs" stroke="#000" stroke-width="0.18">Energia</text>
<text x="582.5" y="142" font-size="11" fill="#000" textLength="46" lengthAdjust="spacingAndGlyphs" stroke="#000" stroke-width="0.18">Korkeus</text>
<text x="670" y="142" font-size="11" fill="#000" textLength="42" lengthAdjust="spacingAndGlyphs" stroke="#000" stroke-width="0.18">Nopeus</text>
<text x="762.5" y="142" font-size="11" fill="#000" textLength="29" lengthAdjust="spacingAndGlyphs" stroke="#000" stroke-width="0.18">R - R</text>
<rect x="822" y="126" width="143" height="21" fill="url(#pCream2)"/>
<rect x="822" y="126" width="143" height="1" fill="#dddcb0"/>
<rect x="822" y="126" width="1" height="21" fill="#aaa"/>
<text x="844" y="143" font-size="11" fill="#000" textLength="100" lengthAdjust="spacingAndGlyphs" stroke="#000" stroke-width="0.18">Merkit päällä/pois</text>
<rect x="96" y="163" width="834" height="116" fill="#000"/>
<rect x="97" y="164" width="832" height="114" fill="url(#pPlot)"/>
<rect x="97" y="164" width="832" height="1" fill="#fff"/>
<path d="M97 165.5 H929" stroke="#999" stroke-width="1" stroke-dasharray="3 3" fill="none"/>
<path d="M97 179.5 H929" stroke="#999" stroke-width="1" stroke-dasharray="3 3" fill="none"/>
<path d="M97 193.5 H929" stroke="#999" stroke-width="1" stroke-dasharray="3 3" fill="none"/>
<path d="M97 207.5 H929" stroke="#999" stroke-width="1" stroke-dasharray="3 3" fill="none"/>
<path d="M97 221.5 H929" stroke="#999" stroke-width="1" stroke-dasharray="3 3" fill="none"/>
<path d="M97 234.5 H929" stroke="#999" stroke-width="1" stroke-dasharray="3 3" fill="none"/>
<path d="M97 248.5 H929" stroke="#999" stroke-width="1" stroke-dasharray="3 3" fill="none"/>
<path d="M97 262.5 H929" stroke="#999" stroke-width="1" stroke-dasharray="3 3" fill="none"/>
<path d="M97 276.5 H929" stroke="#999" stroke-width="1" stroke-dasharray="3 3" fill="none"/>
<path d="M273.5 164 V278" stroke="#a4a4a4" stroke-width="1" stroke-dasharray="3 3" fill="none"/>
<path d="M449.5 164 V278" stroke="#a4a4a4" stroke-width="1" stroke-dasharray="3 3" fill="none"/>
<path d="M626.5 164 V278" stroke="#a4a4a4" stroke-width="1" stroke-dasharray="3 3" fill="none"/>
<path d="M803.5 164 V278" stroke="#a4a4a4" stroke-width="1" stroke-dasharray="3 3" fill="none"/>
<polyline fill="none" stroke="#ff0000" stroke-width="1" points="97.4,242.8 98.4,256.3 99.6,249.5 101.2,243.7 102.4,268.9 103.4,273.6 104.6,252.1 106.3,254.6 108.3,241.1 108.8,244.5 110.5,238.6 111.3,240.3 113.0,235.3 114.7,233.6 117.2,236.9 118.9,233.6 120.6,228.5 122.2,223.5 123.6,222.7 124.8,230.2 126.4,231.9 128.1,231.1 129.8,236.9 131.5,230.2 132.3,231.9 134.0,223.5 134.8,213.4 135.3,220.1 136.5,207.6 137.4,231.9 138.7,227.7 139.9,231.9 141.6,236.1 143.2,231.9 144.9,232.7 146.1,236.1 147.4,225.2 148.6,222.7 149.9,228.5 150.8,234.4 151.6,230.2 152.8,231.9 153.8,230.2 155.5,233.6 157.2,236.1 159.2,228.5 161.7,216.8 162.5,221.8 164.2,215.9 166.7,214.3 169.3,211.8 171.3,209.7 172.6,221.8 173.5,236.9 174.3,229.4 175.5,233.6 176.5,231.9 177.3,240.3 178.0,233.6 179.0,245.3 180.2,247.0 181.9,236.9 182.7,231.9 184.0,226.9 185.2,240.3 186.4,228.5 187.2,222.7 188.1,235.3 189.4,243.7 190.6,251.2 191.4,233.6 192.8,238.6 194.1,231.1 194.8,242.0 195.8,235.3 197.0,249.5 197.5,235.3 198.7,245.3 200.3,255.4 201.2,256.3 202.5,232.7 203.7,244.5 204.5,240.3 205.9,242.0 207.4,263.5 207.9,243.7 209.1,236.9 210.1,234.4 212.1,234.4 213.8,241.1 215.5,240.3 217.1,227.7 218.3,231.9 220.0,236.1 221.3,226.0 222.3,225.2 223.4,259.6 224.4,234.4 226.4,233.6 228.9,232.7 230.6,233.6 231.8,237.8 232.3,230.2 233.1,236.9 234.4,226.9 236.1,226.0 238.1,221.8 239.8,218.5 241.5,229.4 242.8,228.5 244.9,220.1 246.5,215.9 248.5,211.4 249.9,213.4 251.6,221.0 252.7,216.8 254.1,223.5 255.8,230.2 256.9,234.4 258.3,228.5 259.5,227.7 260.8,232.7 262.5,231.9 263.3,221.8 263.7,221.0 265.0,221.8 266.7,230.2 268.4,223.5 270.1,216.8 271.4,222.7 273.1,223.5 274.6,208.4 276.0,221.8 276.8,244.5 277.6,233.6 278.8,248.7 279.7,256.3 280.5,236.9 281.8,235.3 283.5,233.6 285.2,231.1 286.5,223.5 287.7,230.2 289.4,231.9 291.1,232.7 292.8,233.6 294.4,236.9 296.1,231.1 297.8,233.6 299.5,233.6 300.3,224.3 302.0,221.0 303.7,225.2 305.4,232.7 306.7,241.1 307.9,235.3 309.2,233.6 310.7,241.1 312.4,235.3 314.1,233.6 315.8,230.2 317.1,231.9 318.8,229.4 320.8,231.9 321.8,230.2 322.7,252.1 323.8,226.0 325.5,220.1 327.2,211.8 328.5,220.1 329.7,213.4 332.2,209.7 333.9,213.4 335.2,215.9 336.4,210.1 337.6,204.7 338.9,211.8 339.8,218.5 341.0,210.1 342.0,215.9 342.8,219.3 343.6,213.4 344.8,215.9 346.0,219.3 347.0,223.2 348.2,222.7 349.0,219.3 350.7,220.5 353.2,221.8 354.9,215.1 356.2,209.2 357.4,218.5 358.6,211.8 359.6,203.4 360.8,210.1 362.0,219.3 363.3,220.1 365.0,221.0 367.5,223.2 368.3,213.4 369.2,208.4 370.0,221.8 371.2,219.3 372.9,221.0 374.2,224.3 375.6,220.1 377.1,226.5 378.4,220.1 379.6,213.4 380.6,218.5 381.3,212.6 382.6,214.3 383.8,210.1 385.1,213.4 386.8,211.8 388.5,213.4 389.3,215.1 391.0,211.8 392.7,219.3 393.9,214.3 395.2,216.8 396.9,222.7 398.1,218.5 399.1,205.9 401.4,205.9 402.4,223.2 404.5,222.7 412.9,222.2 414.2,220.5 418.7,220.5 420.4,221.8 421.6,219.3 423.3,228.5 424.6,222.7 426.3,216.8 427.6,218.5 428.8,216.5 430.5,217.6 430.0,216.8 431.7,223.2 433.0,218.5 435.1,211.8 436.4,218.5 437.7,215.1 439.8,219.3 441.4,223.2 443.1,218.5 444.5,212.6 445.6,217.6 446.8,216.8 449.0,220.5 450.7,219.3 451.5,223.2 452.9,215.1 454.0,218.5 454.9,211.8 456.9,205.0 459.1,205.9 461.6,207.6 463.6,208.4 465.3,205.0 466.6,209.2 468.3,205.0 470.0,208.4 472.0,213.4 475.0,219.3 475.9,189.9 476.7,178.5 479.2,178.5 480.1,184.0 483.4,188.2 490.1,195.8 498.5,203.4 502.7,206.7 505.3,207.6 506.9,214.3 508.6,203.4 512.0,196.6 515.3,189.9 517.5,183.2 518.4,176.5 519.5,193.3 521.2,218.5 522.1,225.2 522.9,216.8 524.1,225.2 525.4,234.4 527.1,238.3 527.9,231.9 529.1,229.4 530.1,234.4 531.0,228.5 532.1,236.1 533.5,227.7 534.7,233.6 536.3,230.2 538.9,223.5 540.5,220.1 541.4,224.3 543.1,213.4 544.2,205.9 545.6,211.8 546.4,217.6 548.1,207.6 549.8,210.1 551.5,214.3 552.6,209.2 554.0,203.4 554.8,223.5 555.7,225.2 557.3,222.7 560.7,222.3 562.4,223.5 564.1,224.3 564.9,220.1 565.7,225.2 566.1,216.8 568.3,215.6 570.4,215.6 571.6,231.9 572.8,231.9 573.8,208.4 575.0,211.8 577.5,208.4 579.2,207.6 581.7,208.1 583.4,205.9 585.1,211.4 587.6,205.9 590.1,200.0 592.6,191.6 596.0,179.8 598.5,173.1 597.7,178.2 598.5,172.8 600.5,172.8 601.9,182.4 606.1,182.4 606.9,179.8 608.1,182.4 609.4,174.8 611.1,179.0 612.8,184.9 616.2,188.2 621.2,192.4 627.1,197.5 632.1,200.0 636.3,202.5 638.8,208.4 642.2,205.9 646.4,203.4 649.8,200.8 652.6,198.3 653.9,203.4 655.6,212.6 656.8,207.6 659.0,210.1 662.3,212.6 665.2,215.1 666.5,221.8 668.6,217.6 670.7,211.8 671.6,204.2 674.9,199.2 680.0,191.6 683.3,184.9 686.7,177.3 688.4,176.5 695.1,175.6 699.3,174.8 700.5,179.0 702.7,175.6 704.3,179.0 707.7,179.0 712.7,178.5 713.9,181.5 715.6,175.6 717.3,180.7 719.5,186.6 721.1,179.0 722.3,185.7 724.5,205.0 726.2,211.8 728.7,212.6 730.4,214.8 732.1,211.8 734.1,203.4 737.9,195.8 741.3,186.6 744.7,175.6 746.3,176.5 748.0,168.4 749.2,169.4 750.5,175.6 752.5,179.8 755.6,176.5 757.2,169.8 759.8,173.1 762.3,174.8 764.8,174.8 765.7,174.8 766.0,189.1 766.9,203.4 768.2,200.8 770.7,204.2 773.2,204.7 778.3,204.7 779.5,219.3 781.6,219.3 783.3,208.1 784.5,211.8 786.2,205.9 795.9,205.9 798.4,209.2 800.6,203.4 802.3,191.6 804.3,194.1 807.7,197.5 811.9,200.8 813.6,203.4 815.2,195.0 816.4,194.6 817.2,210.9 819.4,214.3 822.8,216.8 827.0,219.3 829.2,219.8 830.3,208.4 831.5,207.6 832.9,218.5 834.2,210.1 835.7,205.0 837.1,210.9 839.6,220.1 841.3,222.7 842.1,211.8 843.8,229.4 845.1,220.1 846.3,229.4 847.5,228.5 848.3,207.6 849.3,207.6 850.0,229.4 850.8,233.2 853.0,231.1 856.4,229.4 858.9,227.7 860.6,228.5 862.3,226.9 863.9,226.5 865.6,236.9 868.1,247.0 869.5,265.5 870.7,258.8 871.5,249.5 872.8,233.6 874.5,216.8 876.2,218.5 878.6,212.6 879.9,230.2 881.6,226.9 884.1,220.1 885.3,210.1 886.6,204.2 888.0,203.4 889.1,206.7 890.3,214.3 891.7,217.6 893.3,214.3 898.4,214.3 900.9,212.6 903.8,212.6 905.9,215.1 908.5,216.8 910.1,217.6 911.8,216.8 913.8,224.3 915.2,216.8 916.0,214.3 917.2,230.2 918.5,215.1 919.4,212.6 921.1,222.7 922.7,216.8 924.4,225.2 925.6,221.8 926.6,213.4 927.8,209.2"/>
<rect x="97" y="279" width="833" height="4" fill="#fff" opacity="0.6"/>
<rect x="96" y="279" width="1" height="4" fill="#000"/>
<rect x="929" y="279" width="1" height="4" fill="#000"/>
<rect x="929" y="398" width="1" height="3" fill="#000"/>
<rect x="95" y="283" width="835" height="115" fill="#000"/>
<rect x="97" y="284" width="832" height="113" fill="url(#pDred)"/>
<path d="M98 288.5 H929" stroke="#550000" stroke-width="1" stroke-dasharray="1 5" fill="none"/>
<path d="M98 306.5 H929" stroke="#550000" stroke-width="1" stroke-dasharray="1 5" fill="none"/>
<path d="M98 323.5 H929" stroke="#550000" stroke-width="1" stroke-dasharray="1 5" fill="none"/>
<path d="M98 341.5 H929" stroke="#550000" stroke-width="1" stroke-dasharray="1 5" fill="none"/>
<path d="M98 358.5 H929" stroke="#550000" stroke-width="1" stroke-dasharray="1 5" fill="none"/>
<path d="M98 375.5 H929" stroke="#550000" stroke-width="1" stroke-dasharray="1 5" fill="none"/>
<path d="M98 393.5 H929" stroke="#550000" stroke-width="1" stroke-dasharray="1 5" fill="none"/>
<path d="M273.5 284 V397" stroke="#440000" stroke-width="1" stroke-dasharray="1 5" fill="none" opacity="0.8"/>
<path d="M450.5 284 V397" stroke="#440000" stroke-width="1" stroke-dasharray="1 5" fill="none" opacity="0.8"/>
<path d="M626.5 284 V397" stroke="#440000" stroke-width="1" stroke-dasharray="1 5" fill="none" opacity="0.8"/>
<path d="M803.5 284 V397" stroke="#440000" stroke-width="1" stroke-dasharray="1 5" fill="none" opacity="0.8"/>
<polyline fill="none" stroke="#ff0000" stroke-width="1.15" points="97.0,392.5 114.5,391.0 119.5,389.2 129.5,387.5 142.0,386.0 159.5,384.2 174.5,378.8 214.5,378.5 232.0,377.2 252.0,373.0 272.0,370.8 302.0,370.5 317.0,368.0 332.0,366.8 340.0,366.0 360.0,363.5 380.0,362.5 402.5,361.8 422.5,359.2 440.0,358.2 457.5,358.0 470.0,355.8 477.0,355.5 483.8,350.5 490.0,341.8 495.0,334.2 501.2,329.8 515.0,329.2 519.5,327.5 530.0,329.2 545.0,331.8 560.0,333.5 575.0,336.0 585.0,336.2 588.8,337.5 588.0,338.0 595.5,335.5 603.0,329.2 618.0,320.5 625.5,313.0 631.8,308.5 638.0,308.8 650.5,311.0 663.0,312.5 673.0,314.5 681.8,314.2 690.5,310.5 700.5,303.0 713.0,296.8 723.0,294.2 730.5,296.2 744.2,296.2 753.0,292.2 759.2,291.0 765.0,288.0 778.0,291.8 780.0,292.8 801.4,299.4 818.1,301.8 839.6,308.5 858.6,316.1 875.3,321.4 884.8,323.3 903.9,324.5 915.8,326.8 928.2,329.5"/>
<circle cx="765" cy="288" r="2.8" fill="#ff0000" stroke="#000" stroke-width="1" shape-rendering="auto"/>
<rect x="97" y="398" width="833" height="3" fill="#fff" opacity="0.7"/>
<rect x="96" y="401" width="834" height="2" fill="#000"/>
<rect x="96" y="398" width="1" height="3" fill="#000"/>
<path d="M930 396 L925 399.5 L930 403 Z" fill="#ff0000" shape-rendering="auto"/>
<rect x="96" y="403" width="1" height="4" fill="#666"/>
<text x="95.7" y="420" font-size="11" fill="#000" text-anchor="middle" stroke="#000" stroke-width="0.18">00:00.00</text>
<rect x="272" y="403" width="1" height="4" fill="#666"/>
<text x="271.7" y="420" font-size="11" fill="#000" text-anchor="middle" stroke="#000" stroke-width="0.18">00:10.00</text>
<rect x="449" y="403" width="1" height="4" fill="#666"/>
<text x="448.7" y="420" font-size="11" fill="#000" text-anchor="middle" stroke="#000" stroke-width="0.18">00:20.00</text>
<rect x="625" y="403" width="1" height="4" fill="#666"/>
<text x="624.7" y="420" font-size="11" fill="#000" text-anchor="middle" stroke="#000" stroke-width="0.18">00:30.00</text>
<rect x="802" y="403" width="1" height="4" fill="#666"/>
<text x="801.7" y="420" font-size="11" fill="#000" text-anchor="middle" stroke="#000" stroke-width="0.18">00:40.00</text>
<rect x="185" y="403" width="1" height="2" fill="#555"/>
<rect x="361" y="403" width="1" height="2" fill="#555"/>
<rect x="538" y="403" width="1" height="2" fill="#555"/>
<rect x="714" y="403" width="1" height="2" fill="#555"/>
<rect x="891" y="403" width="1" height="2" fill="#555"/>
<rect x="936" y="163" width="2" height="116" fill="#000"/>
<rect x="936" y="283" width="2" height="120" fill="#000"/>
<rect x="938" y="165" width="4" height="1" fill="#666"/>
<text x="944" y="169" font-size="11" fill="#000" stroke="#000" stroke-width="0.18">130</text>
<rect x="938" y="172" width="2" height="1" fill="#555"/>
<rect x="938" y="179" width="4" height="1" fill="#666"/>
<text x="944" y="183" font-size="11" fill="#000" stroke="#000" stroke-width="0.18">120</text>
<rect x="938" y="186" width="2" height="1" fill="#555"/>
<rect x="938" y="193" width="4" height="1" fill="#666"/>
<text x="944" y="197" font-size="11" fill="#000" stroke="#000" stroke-width="0.18">110</text>
<rect x="938" y="200" width="2" height="1" fill="#555"/>
<rect x="938" y="207" width="4" height="1" fill="#666"/>
<text x="944" y="211" font-size="11" fill="#000" stroke="#000" stroke-width="0.18">100</text>
<rect x="938" y="214" width="2" height="1" fill="#555"/>
<rect x="938" y="221" width="4" height="1" fill="#666"/>
<text x="944" y="225" font-size="11" fill="#000" stroke="#000" stroke-width="0.18">90</text>
<rect x="938" y="227" width="2" height="1" fill="#555"/>
<rect x="938" y="234" width="4" height="1" fill="#666"/>
<text x="944" y="238" font-size="11" fill="#000" stroke="#000" stroke-width="0.18">80</text>
<rect x="938" y="241" width="2" height="1" fill="#555"/>
<rect x="938" y="248" width="4" height="1" fill="#666"/>
<text x="944" y="252" font-size="11" fill="#000" stroke="#000" stroke-width="0.18">70</text>
<rect x="938" y="255" width="2" height="1" fill="#555"/>
<rect x="938" y="262" width="4" height="1" fill="#666"/>
<text x="944" y="266" font-size="11" fill="#000" stroke="#000" stroke-width="0.18">60</text>
<rect x="938" y="269" width="2" height="1" fill="#555"/>
<rect x="938" y="276" width="4" height="1" fill="#666"/>
<text x="944" y="280" font-size="11" fill="#000" stroke="#000" stroke-width="0.18">50</text>
<rect x="938" y="288" width="4" height="1" fill="#666"/>
<text x="944" y="292" font-size="11" fill="#000" stroke="#000" stroke-width="0.18">6</text>
<rect x="938" y="297" width="2" height="1" fill="#555"/>
<rect x="938" y="306" width="4" height="1" fill="#666"/>
<text x="944" y="310" font-size="11" fill="#000" stroke="#000" stroke-width="0.18">5</text>
<rect x="938" y="315" width="2" height="1" fill="#555"/>
<rect x="938" y="323" width="4" height="1" fill="#666"/>
<text x="944" y="327" font-size="11" fill="#000" stroke="#000" stroke-width="0.18">4</text>
<rect x="938" y="332" width="2" height="1" fill="#555"/>
<rect x="938" y="341" width="4" height="1" fill="#666"/>
<text x="944" y="345" font-size="11" fill="#000" stroke="#000" stroke-width="0.18">3</text>
<rect x="938" y="349" width="2" height="1" fill="#555"/>
<rect x="938" y="358" width="4" height="1" fill="#666"/>
<text x="944" y="362" font-size="11" fill="#000" stroke="#000" stroke-width="0.18">2</text>
<rect x="938" y="367" width="2" height="1" fill="#555"/>
<rect x="938" y="375" width="4" height="1" fill="#666"/>
<text x="944" y="379" font-size="11" fill="#000" stroke="#000" stroke-width="0.18">1</text>
<rect x="938" y="384" width="2" height="1" fill="#555"/>
<rect x="938" y="393" width="4" height="1" fill="#666"/>
<text x="944" y="397" font-size="11" fill="#000" stroke="#000" stroke-width="0.18">0</text>
<text transform="translate(982 219) rotate(90)" font-size="11" text-anchor="middle" stroke="#000" stroke-width="0.18">HR (bpm)</text>
<text transform="translate(982 339.5) rotate(90)" font-size="11" text-anchor="middle" stroke="#000" stroke-width="0.18">EPOC (ml/kg)</text>
<text x="56" y="344" font-size="11" fill="#000" textLength="31" lengthAdjust="spacingAndGlyphs" stroke="#000" stroke-width="0.18">Taso 1</text>
<rect x="91" y="340" width="4" height="1" fill="#666"/>
<rect x="715.5" y="448.5" width="296" height="22" fill="none" stroke="#b0b090" stroke-width="1"/>
<circle cx="728.5" cy="458.5" r="5" fill="#fff" stroke="#666" stroke-width="1.2" shape-rendering="auto"/>
<path d="M725 462 A5 5 0 0 1 732 455" fill="none" stroke="#ccc" stroke-width="1.2" shape-rendering="auto"/>
<circle cx="728.5" cy="458.5" r="1.8" fill="#000" shape-rendering="auto"/>
<text x="740.5" y="462.5" font-size="11" fill="#000" textLength="30.5" lengthAdjust="spacingAndGlyphs" stroke="#000" stroke-width="0.18">Kesto</text>
<circle cx="824.5" cy="458.5" r="5" fill="#fff" stroke="#666" stroke-width="1.2" shape-rendering="auto"/>
<path d="M821 462 A5 5 0 0 1 828 455" fill="none" stroke="#ccc" stroke-width="1.2" shape-rendering="auto"/>
<text x="837" y="462.5" font-size="11" fill="#000" textLength="23" lengthAdjust="spacingAndGlyphs" stroke="#000" stroke-width="0.18">Pvm</text>
<circle cx="904" cy="458.5" r="5" fill="#fff" stroke="#aaa" stroke-width="1.2" shape-rendering="auto"/>
<path d="M900.5 462 A5 5 0 0 1 907.5 455" fill="none" stroke="#ddc" stroke-width="1.2" shape-rendering="auto"/>
<text x="916.5" y="462.5" font-size="11" fill="#aaa" textLength="33" lengthAdjust="spacingAndGlyphs" stroke="#aaa" stroke-width="0.18">Matka</text>
<rect x="39" y="485" width="981" height="230" fill="#000"/>
<rect x="40" y="486" width="979" height="228" fill="url(#pGray)"/>
<rect x="40" y="486" width="979" height="1" fill="#fff"/>
<rect x="40" y="486" width="1" height="228" fill="#fff"/>
<text x="45" y="501" font-size="11" fill="#fff" textLength="146.5" lengthAdjust="spacingAndGlyphs" font-weight="bold" stroke="#fff" stroke-width="0.18">Log: 8.2.2007 10:29:22</text>
<rect x="41" y="506" width="952" height="1" fill="#d4d4d4"/>
<path d="M41 506.5 H993" stroke="#fff" stroke-width="1" stroke-dasharray="1 1" fill="none"/>
<path d="M974 487 L1019 487 L1019 522 L1008 522 Z" fill="url(#pRed)"/>
<path d="M973.5 487 L1008 521.5 L1019 521.5" fill="none" stroke="#fff" stroke-width="1" shape-rendering="auto"/>
<path d="M1003.5 496 L1011.5 496 L1007.5 491.5 Z" fill="#fff"/>
<path d="M1003.5 499 L1011.5 499 L1007.5 503.5 Z" fill="#fff"/>
<rect x="44" y="510" width="96" height="19" fill="url(#pLight)"/>
<rect x="44" y="510" width="96" height="19" fill="#ffffcc" opacity="0.3"/>
<rect x="44" y="510" width="96" height="1" fill="#fff"/>
<rect x="44" y="510" width="1" height="19" fill="#fff"/>
<rect x="139" y="510" width="1" height="19" fill="#fff"/>
<rect x="44" y="528" width="96" height="1" fill="#fff"/>
<text x="60.5" y="525" font-size="11" fill="#000" textLength="63.5" lengthAdjust="spacingAndGlyphs" stroke="#000" stroke-width="0.18">Lisätiedot 1</text>
<text x="155.7" y="524" font-size="11" fill="#000" textLength="64" lengthAdjust="spacingAndGlyphs" stroke="#000" stroke-width="0.18">Lisätiedot 2</text>
<text x="277.8" y="524" font-size="11" fill="#000" textLength="41.5" lengthAdjust="spacingAndGlyphs" stroke="#000" stroke-width="0.18">Väliajat</text>
<text x="404.7" y="524" font-size="11" fill="#000" textLength="26" lengthAdjust="spacingAndGlyphs" stroke="#000" stroke-width="0.18">Data</text>
<text x="592.4" y="524" font-size="11" fill="#000" textLength="50" lengthAdjust="spacingAndGlyphs" stroke="#000" stroke-width="0.18">Muokkaa</text>
<rect x="45" y="531" width="969" height="178" fill="url(#pLight)"/>
<rect x="45" y="531" width="969" height="1" fill="#fff"/>
<rect x="45" y="531" width="1" height="178" fill="#fff"/>
<rect x="45" y="709" width="970" height="1" fill="#333"/>
<rect x="1014" y="531" width="1" height="179" fill="#333"/>
<text x="66" y="557" font-size="11" fill="#000" textLength="27.5" lengthAdjust="spacingAndGlyphs" font-weight="bold" stroke="#000" stroke-width="0.18">Nimi</text>
<text x="66" y="589" font-size="11" fill="#000" textLength="71" lengthAdjust="spacingAndGlyphs" font-weight="bold" stroke="#000" stroke-width="0.18">Aktiviteetti</text>
<text x="66" y="614" font-size="11" fill="#000" textLength="26.3" lengthAdjust="spacingAndGlyphs" font-weight="bold" stroke="#000" stroke-width="0.18">Pvm</text>
<text x="66" y="630" font-size="11" fill="#000" textLength="27.5" lengthAdjust="spacingAndGlyphs" font-weight="bold" stroke="#000" stroke-width="0.18">Alku</text>
<text x="66" y="646" font-size="11" fill="#000" textLength="37.5" lengthAdjust="spacingAndGlyphs" font-weight="bold" stroke="#000" stroke-width="0.18">Loppu</text>
<text x="66" y="669" font-size="11" fill="#000" textLength="34.5" lengthAdjust="spacingAndGlyphs" font-weight="bold" stroke="#000" stroke-width="0.18">Kesto</text>
<text x="66" y="700" font-size="11" fill="#000" textLength="37.5" lengthAdjust="spacingAndGlyphs" font-weight="bold" stroke="#000" stroke-width="0.18">Matka</text>
<text x="186.5" y="557" font-size="11" fill="#000" textLength="105" lengthAdjust="spacingAndGlyphs" stroke="#000" stroke-width="0.18">8.2.2007 10:29:22</text>
<text x="190.5" y="614" font-size="11" fill="#000" textLength="49" lengthAdjust="spacingAndGlyphs" stroke="#000" stroke-width="0.18">8.2.2007</text>
<text x="190.5" y="630" font-size="11" fill="#000" textLength="51" lengthAdjust="spacingAndGlyphs" stroke="#000" stroke-width="0.18">10:29:22</text>
<text x="190.5" y="646" font-size="11" fill="#000" textLength="51" lengthAdjust="spacingAndGlyphs" stroke="#000" stroke-width="0.18">11:16:30</text>
<text x="190.5" y="669" font-size="11" fill="#000" textLength="61" lengthAdjust="spacingAndGlyphs" stroke="#000" stroke-width="0.18">00:47.07,9</text>
<text x="190.5" y="700" font-size="11" fill="#000" textLength="6.5" lengthAdjust="spacingAndGlyphs" stroke="#000" stroke-width="0.18">0</text>
<text x="270.5" y="700" font-size="11" fill="#000" textLength="17" lengthAdjust="spacingAndGlyphs" stroke="#000" stroke-width="0.18">km</text>
<text x="332" y="557" font-size="11" fill="#000" textLength="27.3" lengthAdjust="spacingAndGlyphs" font-weight="bold" stroke="#000" stroke-width="0.18">Syke</text>
<text x="332" y="573" font-size="11" fill="#000" textLength="45.5" lengthAdjust="spacingAndGlyphs" font-weight="bold" stroke="#000" stroke-width="0.18">Yläraja</text>
<text x="332" y="590" font-size="11" fill="#000" textLength="46.3" lengthAdjust="spacingAndGlyphs" font-weight="bold" stroke="#000" stroke-width="0.18">Alaraja</text>
<text x="332" y="614" font-size="11" fill="#000" textLength="14.3" lengthAdjust="spacingAndGlyphs" font-weight="bold" stroke="#000" stroke-width="0.18">Yli</text>
<text x="332" y="630" font-size="11" fill="#000" textLength="51" lengthAdjust="spacingAndGlyphs" font-weight="bold" stroke="#000" stroke-width="0.18">Alueella</text>
<text x="332" y="646" font-size="11" fill="#000" textLength="23" lengthAdjust="spacingAndGlyphs" font-weight="bold" stroke="#000" stroke-width="0.18">Alle</text>
<text x="332" y="669" font-size="11" fill="#000" textLength="35.5" lengthAdjust="spacingAndGlyphs" font-weight="bold" stroke="#000" stroke-width="0.18">Maks.</text>
<text x="332" y="684" font-size="11" fill="#000" textLength="18.5" lengthAdjust="spacingAndGlyphs" font-weight="bold" stroke="#000" stroke-width="0.18">Ka.</text>
<text x="332" y="700" font-size="11" fill="#000" textLength="24.8" lengthAdjust="spacingAndGlyphs" font-weight="bold" stroke="#000" stroke-width="0.18">Min.</text>
<text x="456.8" y="573" font-size="11" fill="#000" textLength="19.5" lengthAdjust="spacingAndGlyphs" stroke="#000" stroke-width="0.18">200</text>
<text x="456.8" y="589" font-size="11" fill="#000" textLength="12.5" lengthAdjust="spacingAndGlyphs" stroke="#000" stroke-width="0.18">40</text>
<rect x="457" y="608" width="4" height="1" fill="#333"/>
<text x="456.8" y="628" font-size="11" fill="#000" textLength="49.5" lengthAdjust="spacingAndGlyphs" stroke="#000" stroke-width="0.18">00:47.06</text>
<rect x="457" y="639" width="4" height="1" fill="#333"/>
<text x="456.8" y="669" font-size="11" fill="#000" textLength="19.5" lengthAdjust="spacingAndGlyphs" stroke="#000" stroke-width="0.18">128</text>
<text x="456.8" y="684" font-size="11" fill="#000" textLength="12.5" lengthAdjust="spacingAndGlyphs" stroke="#000" stroke-width="0.18">94</text>
<text x="456.8" y="700" font-size="11" fill="#000" textLength="12.5" lengthAdjust="spacingAndGlyphs" stroke="#000" stroke-width="0.18">52</text>
<text x="538.8" y="573" font-size="11" fill="#000" textLength="23.2" lengthAdjust="spacingAndGlyphs" stroke="#000" stroke-width="0.18">bpm</text>
<text x="538.8" y="589" font-size="11" fill="#000" textLength="23.2" lengthAdjust="spacingAndGlyphs" stroke="#000" stroke-width="0.18">bpm</text>
<text x="538.8" y="669" font-size="11" fill="#000" textLength="23.2" lengthAdjust="spacingAndGlyphs" stroke="#000" stroke-width="0.18">bpm</text>
<text x="538.8" y="685" font-size="11" fill="#000" textLength="23.2" lengthAdjust="spacingAndGlyphs" stroke="#000" stroke-width="0.18">bpm</text>
<text x="538.8" y="700" font-size="11" fill="#000" textLength="23.2" lengthAdjust="spacingAndGlyphs" stroke="#000" stroke-width="0.18">bpm</text>
<text x="578" y="557" font-size="11" fill="#000" textLength="115" lengthAdjust="spacingAndGlyphs" font-weight="bold" stroke="#000" stroke-width="0.18">Muut kehoparametrit</text>
<text x="578" y="573" font-size="11" fill="#000" textLength="125" lengthAdjust="spacingAndGlyphs" font-weight="bold" stroke="#000" stroke-width="0.18">EPOC:in huippuarvo</text>
<text x="578" y="589" font-size="11" fill="#000" textLength="107" lengthAdjust="spacingAndGlyphs" font-weight="bold" stroke="#000" stroke-width="0.18">Harjoitusvaikute</text>
<text x="578" y="612" font-size="11" fill="#000" textLength="68" lengthAdjust="spacingAndGlyphs" font-weight="bold" stroke="#000" stroke-width="0.18">Ventilaatio</text>
<text x="578" y="628" font-size="11" fill="#000" textLength="87" lengthAdjust="spacingAndGlyphs" font-weight="bold" stroke="#000" stroke-width="0.18">Hapenkulutus</text>
<text x="578" y="644" font-size="11" fill="#000" textLength="95" lengthAdjust="spacingAndGlyphs" font-weight="bold" stroke="#000" stroke-width="0.18">Hengitystiheys</text>
<text x="578" y="669" font-size="11" fill="#000" textLength="167.5" lengthAdjust="spacingAndGlyphs" font-weight="bold" stroke="#000" stroke-width="0.18">Energian kokonaiskulutus</text>
<text x="761" y="573" font-size="11" fill="#000" textLength="16.5" lengthAdjust="spacingAndGlyphs" stroke="#000" stroke-width="0.18">6.0</text>
<text x="761" y="589" font-size="11" fill="#000" textLength="16" lengthAdjust="spacingAndGlyphs" stroke="#000" stroke-width="0.18">1,3</text>
<text x="761" y="612" font-size="11" fill="#000" textLength="19" lengthAdjust="spacingAndGlyphs" stroke="#000" stroke-width="0.18">164</text>
<text x="761" y="628" font-size="11" fill="#000" textLength="12.5" lengthAdjust="spacingAndGlyphs" stroke="#000" stroke-width="0.18">38</text>
<text x="761" y="644" font-size="11" fill="#000" textLength="12.5" lengthAdjust="spacingAndGlyphs" stroke="#000" stroke-width="0.18">68</text>
<text x="761" y="669" font-size="11" fill="#000" textLength="19" lengthAdjust="spacingAndGlyphs" stroke="#000" stroke-width="0.18">312</text>
<text x="834.6" y="573" font-size="11" fill="#000" textLength="31.7" lengthAdjust="spacingAndGlyphs" stroke="#000" stroke-width="0.18">ml/kg</text>
<text x="834.6" y="612" font-size="11" fill="#000" textLength="27.7" lengthAdjust="spacingAndGlyphs" stroke="#000" stroke-width="0.18">l/min</text>
<text x="834.6" y="628" font-size="11" fill="#000" textLength="58" lengthAdjust="spacingAndGlyphs" stroke="#000" stroke-width="0.18">ml/kg/min</text>
<text x="834.6" y="644" font-size="11" fill="#000" textLength="23.8" lengthAdjust="spacingAndGlyphs" stroke="#000" stroke-width="0.18">bpm</text>
<text x="834.6" y="669" font-size="11" fill="#000" textLength="22.3" lengthAdjust="spacingAndGlyphs" stroke="#000" stroke-width="0.18">kcal</text>
<rect x="0" y="721" width="499" height="1" fill="#999"/>
<rect x="502" y="721" width="508" height="1" fill="#999"/>
<rect x="499" y="721" width="3" height="17" fill="#fff"/>
<rect x="502" y="721" width="1" height="16" fill="#999"/>
<rect x="0" y="722" width="1" height="15" fill="#aaa"/>
<rect x="1010" y="721" width="1" height="17" fill="#fff"/>
<path d="M1011 736.5 L1023 724.5 M1015 736.5 L1023 728.5 M1019 736.5 L1023 732.5" stroke="#999" stroke-width="1.3" fill="none" shape-rendering="auto"/>
<rect x="0" y="738" width="1024" height="30" fill="url(#pTask)"/>
<rect x="0" y="737" width="1024" height="1" fill="#fff"/>
<rect x="0" y="738" width="1024" height="1" fill="#3366cc"/>
<rect x="0" y="739" width="1024" height="1" fill="#3388ff"/>
<rect x="0" y="740" width="1024" height="1" fill="#3377ff"/>
<rect x="0" y="741" width="1024" height="1" fill="#3366ee"/>
<rect x="0" y="766" width="1024" height="1" fill="#0033cc"/>
<rect x="0" y="767" width="1024" height="1" fill="#003399"/>
<path d="M0 738 H128 Q139 742 139 753 Q139 764 132 768 H0 Z" fill="url(#pGreen)" shape-rendering="auto"/>
<path d="M0 739.5 H127 Q136 742 137.5 750" fill="none" stroke="#77bb77" stroke-width="1.5" shape-rendering="auto"/>
<rect x="0" y="738" width="2" height="30" fill="#226644"/>
<g shape-rendering="auto"><path d="M13 745 Q17 743 21 745 L19.5 752 Q16 750.5 11.5 752 Z" fill="#ee5522"/><path d="M22.5 746 Q26 748 29 746 L27.5 753 Q24 755 21 753 Z" fill="#77bb22"/><path d="M11 753.5 Q15 752 19 753.5 L17.5 760 Q14 758.5 9.5 760.5 Z" fill="#4466dd"/><path d="M20.5 754.5 Q24 756.5 27 755 L25.5 761.5 Q22 763 19 761.5 Z" fill="#eebb11"/></g>
<path d="M0 762 H136 Q134 766 132 768 H0 Z" fill="#0a4a0a" opacity="0.35" shape-rendering="auto"/>
<path d="M0 738 H128 L131 739.5 H0 Z" fill="#0a4a0a" opacity="0.45" shape-rendering="auto"/>
<text x="36" y="759.3" font-size="18" fill="#1d5a1d" textLength="79" lengthAdjust="spacingAndGlyphs" font-weight="bold" font-style="italic" opacity="0.7" stroke="none">Käynnistä</text>
<text x="35.3" y="758.3" font-size="18" fill="#fff" textLength="79" lengthAdjust="spacingAndGlyphs" font-weight="bold" font-style="italic" stroke="none">Käynnistä</text>
<rect x="150.5" y="741.5" width="158" height="23" rx="2" fill="#2255cc" stroke="#1a44aa" stroke-width="1" shape-rendering="auto"/>
<rect x="151" y="742" width="157" height="22" fill="url(#pTask)" opacity="0.5"/>
<rect x="161" y="745" width="14" height="15" fill="#aaddee"/>
<g fill="#1a5f8a" shape-rendering="auto"><circle cx="168" cy="748.3" r="1.6"/><path d="M165 751.5L168 750L170 750.5L172 752.5L171.4 753.3L169.6 752.2L169.4 754.5L171 758.5L169.8 758.8L168.2 755.6L166.4 758.8L165.2 758.3L167.2 754.3L167.2 751.8L165.6 752.6Z"/></g>
<text x="180" y="758" font-size="11" fill="#fff" textLength="115" lengthAdjust="spacingAndGlyphs" stroke="#fff" stroke-width="0.18">Suunto Training Mana...</text>
<rect x="914" y="738" width="110" height="30" fill="url(#pTray)"/>
<rect x="914" y="738" width="110" height="1" fill="#3399ff"/>
<rect x="914" y="739" width="110" height="1" fill="#33ccff"/>
<rect x="914" y="766" width="110" height="1" fill="#0066cc"/>
<rect x="914" y="767" width="110" height="1" fill="#0066cc"/>
<rect x="875" y="744" width="23" height="19" fill="#2a5fd0" opacity="0.6"/>
<text x="880" y="758" font-size="12" fill="#fff" textLength="11" lengthAdjust="spacingAndGlyphs" stroke="#fff" stroke-width="0.18">FI</text>
<circle cx="913" cy="753" r="8" fill="#2288ee" stroke="#99ccff" stroke-width="1.2" shape-rendering="auto"/>
<path d="M915 749 L911 753 L915 757" fill="none" stroke="#fff" stroke-width="2" shape-rendering="auto"/>
<g shape-rendering="auto"><rect x="930" y="744" width="9" height="8" fill="#334488" stroke="#99a" stroke-width="1"/><rect x="925" y="749" width="9" height="8" fill="#223377" stroke="#aab" stroke-width="1"/><rect x="927" y="758" width="8" height="2" fill="#99a"/></g>
<g shape-rendering="auto"><ellipse cx="948.5" cy="752" rx="5.5" ry="6.5" fill="#888" stroke="#444" stroke-width="1"/><ellipse cx="947.5" cy="751" rx="2.5" ry="3" fill="#ccc"/><path d="M953 759 Q957 757 958 753" fill="none" stroke="#99aaff" stroke-width="1.2"/></g>
<g shape-rendering="auto"><path d="M960 745 L976 745 L968 759 Z" fill="#0000ee" stroke="#000" stroke-width="1.2"/><path d="M964 748 L973 748 L968.5 752 L971 752 L968 756" fill="none" stroke="#ddd" stroke-width="1.3"/></g>
<text x="983.5" y="758" font-size="12" fill="#fff" textLength="26" lengthAdjust="spacingAndGlyphs" stroke="#fff" stroke-width="0.18">11:21</text>
</svg>
</body></html>
